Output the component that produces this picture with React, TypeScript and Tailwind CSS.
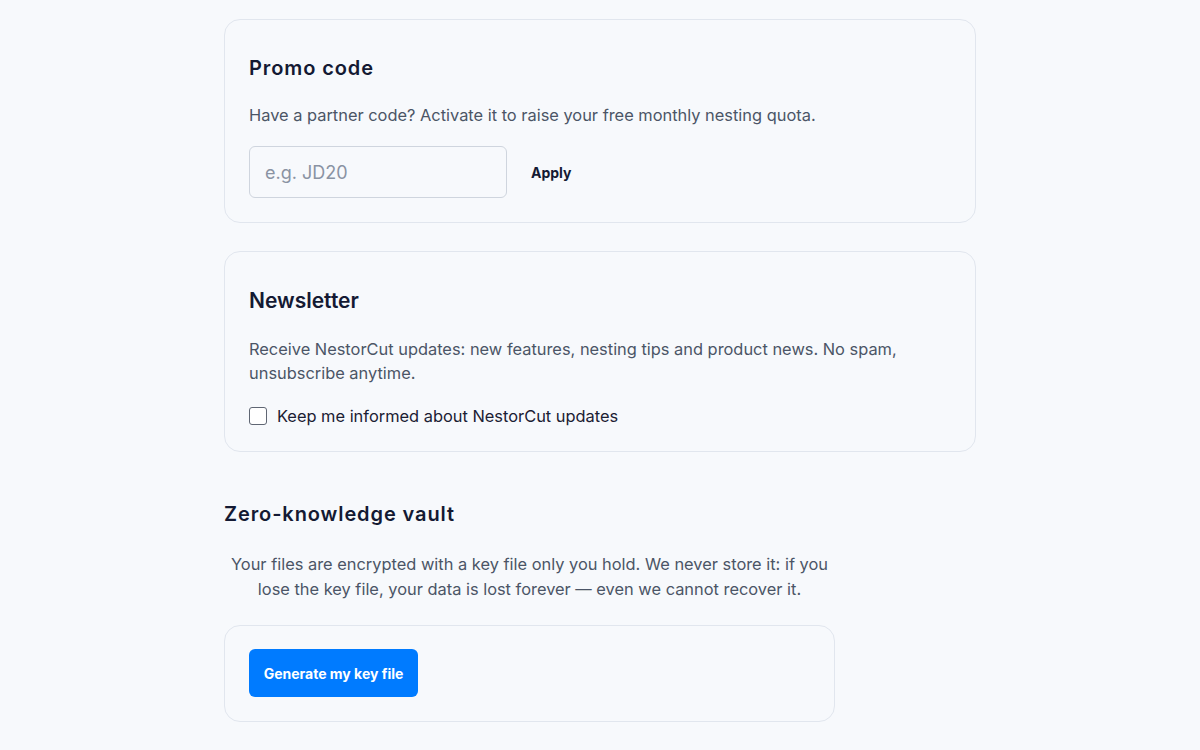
import { useState } from "react";

const body = "font-['Inter','Noto_Sans',sans-serif]";
const display = "font-['Inter','Noto_Sans',sans-serif] tracking-[0.045em]";

export default function App() {
  const [code, setCode] = useState("");
  const [subscribed, setSubscribed] = useState(false);

  return (
    <div className={`min-h-screen w-full bg-[#f7f9fc] ${body}`}>
      <div className="mx-auto w-[752px] pt-[19px]">
        {/* Promo code */}
        <section className="h-[204px] rounded-2xl border border-[#e1e6ee] px-6 pt-[34px]">
          <h2 className={`text-[20px] font-semibold leading-7 text-[#141a33] ${display}`}>Promo code</h2>
          <p className="mt-[21px] text-[16.4px] leading-6 text-[#4b5566]">
            Have a partner code? Activate it to raise your free monthly nesting quota.
          </p>
          <div className="mt-[19px] flex items-center gap-6">
            <input
              value={code}
              onChange={(e) => setCode(e.target.value)}
              placeholder="e.g. JD20"
              className="h-[52px] w-[258px] rounded-md border border-[#cfd5de] bg-transparent px-[15px] text-[18px] text-[#141a33] outline-none placeholder:text-[#8a93a3]"
            />
            <button className="text-[14px] font-bold text-[#141a33]">Apply</button>
          </div>
        </section>

        {/* Newsletter */}
        <section className="mt-[28px] h-[201px] rounded-2xl border border-[#e1e6ee] px-6 pt-[35px]">
          <h2 className="text-[21px] font-semibold leading-7 text-[#141a33]">Newsletter</h2>
          <p className="mt-[22px] text-[16.4px] leading-6 text-[#4b5566]">
            Receive NestorCut updates: new features, nesting tips and product news. No spam,
            <br />
            unsubscribe anytime.
          </p>
          <label className="mt-[19px] flex cursor-pointer items-center gap-[10px]">
            <input
              type="checkbox"
              checked={subscribed}
              onChange={(e) => setSubscribed(e.target.checked)}
              className="h-[18px] w-[18px] appearance-none rounded-[3px] border-[1.5px] border-[#5f6673] bg-white checked:bg-[#007bff]"
            />
            <span className="text-[16.4px] leading-6 text-[#1b2033]">Keep me informed about NestorCut updates</span>
          </label>
        </section>

        {/* Vault */}
        <section className="mt-[48px] w-[611px]">
          <h2 className={`text-[20px] font-semibold leading-7 text-[#141a33] ${display}`}>Zero-knowledge vault</h2>
          <p className="mt-[24px] text-center text-[16.4px] leading-[25px] text-[#4b5566]">
            Your files are encrypted with a key file only you hold. We never store it: if you
            <br />
            lose the key file, your data is lost forever — even we cannot recover it.
          </p>
          <div className="mt-[23px] h-[97px] rounded-2xl border border-[#e1e6ee] px-6 pt-[23px]">
            <button className="h-[48px] w-[169px] rounded-md bg-[#007bff] text-[14px] font-bold text-white">
              Generate my key file
            </button>
          </div>
        </section>
      </div>
    </div>
  );
}
